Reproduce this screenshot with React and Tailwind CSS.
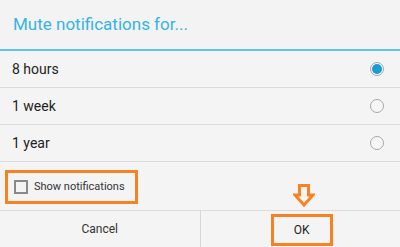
import React, { useState } from 'react';

const options = ['8 hours', '1 week', '1 year'];

const Radio = ({ checked }) => (
  <span className="flex h-[14px] w-[14px] items-center justify-center rounded-full border border-[#a8a8a8] bg-[#f6f6f6]">
    {checked && <span className="h-[10px] w-[10px] rounded-full bg-[#1a9bd6]" />}
  </span>
);

const ArrowDown = () => (
  <svg width="22" height="23" viewBox="0 0 22 23" className="block">
    <path
      d="M6.5 1.5 H15.5 V11 H20 L11 21 L2 11 H6.5 Z"
      fill="none"
      stroke="#f7821f"
      strokeWidth="3"
      strokeLinejoin="miter"
    />
  </svg>
);

export default function App() {
  const [selected, setSelected] = useState(0);

  return (
    <div className="flex h-[247px] w-[400px] flex-col bg-[#f4f4f4] font-['Roboto',sans-serif] text-[#222]">
      <div className="flex h-[49px] items-center bg-[#f3f3f3] pl-[13px]">
        <span className="text-[17px] text-[#35b4e6]">Mute notifications for...</span>
      </div>
      <div className="h-[2px] bg-[#62c3ec]" />

      {options.map((label, i) => (
        <div
          key={label}
          onClick={() => setSelected(i)}
          className="flex h-[37px] items-center justify-between border-b border-[#dcdcdc] pl-[12px] pr-[16px]"
        >
          <span className="text-[14px]">{label}</span>
          <Radio checked={selected === i} />
        </div>
      ))}

      <div className="relative flex h-[49px] items-center border-b border-[#dcdcdc]">
        <div className="ml-[5px] mt-[2px] flex h-[34px] w-[133px] items-center border-[3px] border-[#f7821f] pl-[6px]">
          <span className="h-[14px] w-[14px] border-2 border-[#8a8a8a]" />
          <span className="ml-[6px] text-[11px] text-[#333]">Show notifications</span>
        </div>
        <div className="absolute left-[293px] top-[22px]">
          <ArrowDown />
        </div>
      </div>

      <div className="flex flex-1">
        <div className="flex flex-1 items-center justify-center border-r border-[#d6d6d6] text-[12px] text-[#333]">
          Cancel
        </div>
        <div className="flex flex-1 items-center justify-center">
          <div className="ml-[3px] mt-[1px] flex h-[32px] w-[62px] items-center justify-center border-[3px] border-[#f7821f] text-[12px] text-[#222]">
            OK
          </div>
        </div>
      </div>
    </div>
  );
}
